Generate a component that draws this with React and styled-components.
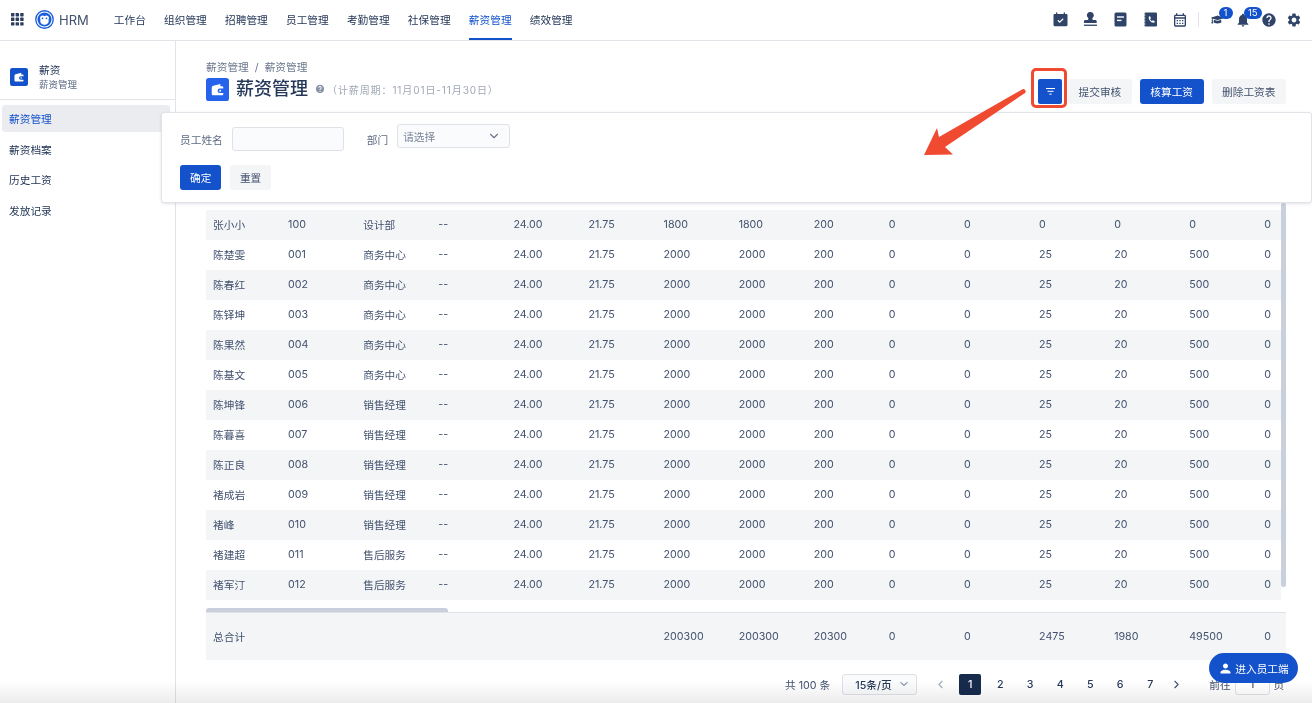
import React from "react";
import styled, { createGlobalStyle } from "styled-components";
import { MdHelp, MdNotifications, MdSettings, MdOutlineCalendarMonth, MdPerson } from "react-icons/md";
import { FaGraduationCap } from "react-icons/fa";
import { FiChevronDown, FiChevronLeft, FiChevronRight } from "react-icons/fi";

const navItems = ["工作台", "组织管理", "招聘管理", "员工管理", "考勤管理", "社保管理", "薪资管理", "绩效管理"];
const sideItems = ["薪资管理", "薪资档案", "历史工资", "发放记录"];

const staff = [
    ["陈楚雯", "001", "商务中心"],
    ["陈春红", "002", "商务中心"],
    ["陈铎坤", "003", "商务中心"],
    ["陈果然", "004", "商务中心"],
    ["陈基文", "005", "商务中心"],
    ["陈坤锋", "006", "销售经理"],
    ["陈暮喜", "007", "销售经理"],
    ["陈正良", "008", "销售经理"],
    ["褚成岩", "009", "销售经理"],
    ["褚峰", "010", "销售经理"],
    ["褚建超", "011", "售后服务"],
    ["褚军汀", "012", "售后服务"],
];

const rows = [
    ["张小小", "100", "设计部", "--", "24.00", "21.75", "1800", "1800", "200", "0", "0", "0", "0", "0", "0"],
    ...staff.map((s) => [...s, "--", "24.00", "21.75", "2000", "2000", "200", "0", "0", "25", "20", "500", "0"]),
];

const totals = ["总合计", "", "", "", "", "", "200300", "200300", "20300", "0", "0", "2475", "1980", "49500", "0"];

const WalletIcon = ({ size, color }) => (
    <svg width={size} height={size} viewBox="0 0 24 24">
        <rect width="24" height="24" rx="3" fill={color} />
        <path d="M6 10.2c0-1 .7-1.8 1.6-2L15 6.2v2.3h2c.6 0 1 .4 1 1V11h-3.6a2.3 2.3 0 0 0 0 4.6H18v1.4c0 .6-.4 1-1 1H7c-.6 0-1-.4-1-1z" fill="#fff" />
        <circle cx="14.8" cy="13.3" r="1" fill="#fff" />
    </svg>
);

const AppsIcon = () => (
    <svg width="13" height="13" viewBox="0 0 13 13" fill="#2c3e5d">
        {[0, 1, 2].flatMap((r) =>
            [0, 1, 2].map((c) => <rect key={`${r}${c}`} x={c * 4.6} y={r * 4.6} width="3.4" height="3.4" rx=".6" />)
        )}
    </svg>
);

const LogoIcon = () => (
    <svg width="19" height="19" viewBox="0 0 20 20">
        <circle cx="10" cy="10" r="9.2" fill="#fff" stroke="#1b5fdc" strokeWidth="1.4" />
        <circle cx="10" cy="10" r="7.4" fill="#1b5fdc" />
        <path d="M6 6.5c1.2-.9 2.8-.9 4 0 1.2-.9 2.8-.9 4 0 .9 1 .9 2.6.2 3.7.9 2.6-1 5.3-4.2 5.3s-5.100-2.700-4.200-5.300C5.100 9.100 5.100 7.500 6 6.500z" fill="#fff" />
        <circle cx="7.900" cy="8.800" r=".9" fill="#1b5fdc" />
        <circle cx="12.100" cy="8.800" r=".9" fill="#1b5fdc" />
    </svg>
);

const CalendarCheck = () => (
    <svg width="15" height="15" viewBox="0 0 15 15">
        <path d="M3 .5h1.300v1.500h6.400V.5H12v1.500h1.300c.7 0 1.200.5 1.200 1.200v9.900c0 .7-.5 1.200-1.200 1.200H1.700c-.7 0-1.200-.5-1.200-1.200V3.200C.5 2.500 1 2 1.700 2H3z" fill="#2f4468" />
        <path d="M4.800 8.300l1.900 1.800 3.500-3.300" fill="none" stroke="#fff" strokeWidth="1.200" />
    </svg>
);

const StampIcon = () => (
    <svg width="15" height="15" viewBox="0 0 15 15" fill="#2f4468">
        <path d="M7.500 0a3.300 3.300 0 0 1 2 5.900c-.3.600-.2 1.600.5 2.100h2.300c.8 0 1.400.6 1.400 1.400V11H1V9.400C1 8.600 1.600 8 2.400 8h2.300c.7-.5.800-1.500.5-2.100A3.300 3.300 0 0 1 7.500 0z" />
        <rect x="1" y="12.600" width="13" height="1.300" />
    </svg>
);

const FormIcon = () => (
    <svg width="15" height="15" viewBox="0 0 15 15">
        <rect x="1.500" y=".5" width="12" height="14" rx="1.500" fill="#2f4468" />
        <rect x="4" y="4.300" width="7" height="1.400" fill="#fff" />
        <rect x="4" y="7.700" width="4.500" height="1.400" fill="#fff" />
    </svg>
);

const PhoneBookIcon = () => (
    <svg width="15" height="15" viewBox="0 0 15 15">
        <rect x="1.500" y=".5" width="12.500" height="14" rx="1.200" fill="#2f4468" />
        <path d="M1 3h1.500M1 6h1.500M1 9h1.500M1 12h1.500" stroke="#fff" strokeWidth=".8" />
        <path d="M5.600 3.300l1.300-.3.900 2.100-.9.700c.3.900 1 1.700 1.900 2.100l.8-.8 2 1-.3 1.300c-3.200.8-6.400-3-5.700-6.100z" fill="#fff" transform="translate(.2 1.200)" />
    </svg>
);

const Root = createGlobalStyle`
    html, body {
        margin: 0;
        padding: 0;
        background: #fff;
    }
    body {
        font-family: Inter, "Noto Sans CJK SC", sans-serif;
        color: #253858;
    }
`;

const App = () => (
    <Page>
        <Root />
        <TopBar>
            <AppsIcon />
            <Brand>
                <LogoIcon />
                <BrandName>HRM</BrandName>
            </Brand>
            <Nav>
                {navItems.map((item) => (
                    <NavItem key={item} $active={item === "薪资管理"}>
                        {item}
                    </NavItem>
                ))}
            </Nav>
            <Tools>
                <ToolSlot><CalendarCheck /></ToolSlot>
                <ToolSlot><StampIcon /></ToolSlot>
                <ToolSlot><FormIcon /></ToolSlot>
                <ToolSlot><PhoneBookIcon /></ToolSlot>
                <ToolSlot><MdOutlineCalendarMonth size={16} /></ToolSlot>
                <ToolDivider />
                <ToolSlot $narrow>
                    <FaGraduationCap size={13} />
                    <Badge>1</Badge>
                </ToolSlot>
                <ToolSlot $narrow>
                    <MdNotifications size={16} />
                    <Badge>15</Badge>
                </ToolSlot>
                <ToolSlot $narrow><MdHelp size={16} /></ToolSlot>
                <ToolSlot $narrow><MdSettings size={16} /></ToolSlot>
            </Tools>
        </TopBar>

        <Body>
            <Sidebar>
                <SideHead>
                    <WalletIcon size={18} color="#1452cc" />
                    <SideTitles>
                        <SideTitle>薪资</SideTitle>
                        <SideSub>薪资管理</SideSub>
                    </SideTitles>
                </SideHead>
                <SideMenu>
                    {sideItems.map((item, index) => (
                        <SideItem key={item} $active={index === 0}>
                            {item}
                        </SideItem>
                    ))}
                </SideMenu>
            </Sidebar>

            <Main>
                <PageHead>
                    <div>
                        <Crumbs>薪资管理 <CrumbSep>/</CrumbSep> 薪资管理</Crumbs>
                        <TitleRow>
                            <WalletIcon size={23} color="#2563eb" />
                            <Title>薪资管理</Title>
                            <MdHelp size={10} color="#8a94a6" />
                            <Period>（计薪周期：11月01日-11月30日）</Period>
                        </TitleRow>
                    </div>
                    <Actions>
                        <IconButton>
                            <svg width="9" height="7" viewBox="0 0 9 7" fill="#fff">
                                <rect width="9" height="1" />
                                <rect x="1.500" y="2.800" width="6" height="1" />
                                <rect x="3.300" y="5.600" width="2.400" height="1" />
                            </svg>
                            <RedFrame />
                        </IconButton>
                        <Button>提交审核</Button>
                        <Button $primary>核算工资</Button>
                        <Button>删除工资表</Button>
                    </Actions>
                </PageHead>

                <TableArea>
                    {rows.map((row, r) => (
                        <Row key={row[1]} $shaded={r % 2 === 0}>
                            {row.map((cell, c) => (
                                <Cell key={c}>{cell}</Cell>
                            ))}
                        </Row>
                    ))}
                    <VScroll />
                    <HScrollTrack>
                        <HScroll />
                    </HScrollTrack>
                    <TotalRow>
                        {totals.map((cell, c) => (
                            <Cell key={c}>{cell}</Cell>
                        ))}
                    </TotalRow>
                </TableArea>

                <Pager>
                    <PagerText>共 100 条</PagerText>
                    <PageSize>
                        15条/页
                        <FiChevronDown size={12} color="#42526e" />
                    </PageSize>
                    <PageNums>
                        <PageArrow $muted><FiChevronLeft size={13} /></PageArrow>
                        {[1, 2, 3, 4, 5, 6, 7].map((n) => (
                            <PageNum key={n} $active={n === 1}>{n}</PageNum>
                        ))}
                        <NextArrow><FiChevronRight size={13} /></NextArrow>
                    </PageNums>
                    <JumpWrap>
                        <PagerText>前往</PagerText>
                        <JumpBox>1</JumpBox>
                        <PagerText>页</PagerText>
                    </JumpWrap>
                </Pager>
            </Main>
        </Body>

        <FilterPanel>
            <FilterFields>
                <FieldLabel>员工姓名</FieldLabel>
                <NameInput />
                <DeptLabel>部门</DeptLabel>
                <DeptSelect>
                    请选择
                    <FiChevronDown size={14} color="#6b778c" />
                </DeptSelect>
            </FilterFields>
            <FilterButtons>
                <PanelButton $primary>确定</PanelButton>
                <PanelButton>重置</PanelButton>
            </FilterButtons>
        </FilterPanel>

        <Arrow width="115" height="80" viewBox="0 0 115 80">
            <path
                d="M100.500 5.200c1.900-1.200 4.500 2.200 2.500 3.700L23 63l8 7.500L2 71l13-27 2 9z"
                fill="#f04b30"
            />
        </Arrow>

        <BottomFade />
        <StaffButton>
            <MdPerson size={15} />
            进入员工端
        </StaffButton>
    </Page>
);

const Page = styled.div`
    position: relative;
    width: 1312px;
    height: 703px;
    overflow: hidden;
    font-size: 10.7px;
`;

const TopBar = styled.header`
    display: flex;
    align-items: center;
    height: 39px;
    padding: 0 0 1px 11px;
    border-bottom: 1px solid #e1e3e8;
`;

const Brand = styled.div`
    display: flex;
    align-items: center;
    gap: 5px;
    margin-left: 11px;
`;

const BrandName = styled.span`
    font-size: 13px;
    color: #42526e;
`;

const Nav = styled.nav`
    display: flex;
    gap: 18.200px;
    margin: 0 0 -1px 25px;
`;

const NavItem = styled.a`
    display: flex;
    align-items: center;
    height: 40px;
    box-sizing: border-box;
    white-space: nowrap;
    color: ${({ $active }) => ($active ? "#1452cc" : "#253858")};
    border-bottom: 2px solid ${({ $active }) => ($active ? "#1452cc" : "transparent")};
`;

const Tools = styled.div`
    display: flex;
    align-items: center;
    margin-left: auto;
    padding-right: 5px;
`;

const ToolSlot = styled.span`
    position: relative;
    display: flex;
    justify-content: center;
    align-items: center;
    width: ${({ $narrow }) => ($narrow ? "25.500px" : "30px")};
    height: 20px;
    color: #2f4468;
`;

const ToolDivider = styled.span`
    width: 1px;
    height: 15px;
    margin: 0 6px 0 3px;
    background: #e1e3e8;
`;

const Badge = styled.span`
    position: absolute;
    top: -3px;
    left: 13.500px;
    min-width: 6px;
    padding: 0 4px;
    height: 12px;
    line-height: 12px;
    border-radius: 6px;
    text-align: center;
    font-size: 9.500px;
    color: #fff;
    background: #1452cc;
`;

const Body = styled.div`
    display: flex;
    height: 662px;
`;

const Sidebar = styled.aside`
    flex: none;
    width: 175px;
    border-right: 1px solid #e1e3e8;
`;

const SideHead = styled.div`
    display: flex;
    align-items: center;
    gap: 11px;
    box-sizing: border-box;
    height: 59px;
    padding: 14px 0 0 10px;
    border-bottom: 1px solid #e1e3e8;
`;

const SideTitles = styled.div`
    display: flex;
    flex-direction: column;
    gap: 1px;
`;

const SideTitle = styled.span`
    line-height: 13px;
    color: #253858;
`;

const SideSub = styled.span`
    line-height: 13px;
    font-size: 9.500px;
    color: #5e6c84;
`;

const SideMenu = styled.div`
    display: flex;
    flex-direction: column;
    gap: 3.700px;
    padding: 5px 5px 0 2px;
`;

const SideItem = styled.a`
    display: flex;
    align-items: center;
    height: 27px;
    padding-left: 7px;
    border-radius: 3px;
    color: ${({ $active }) => ($active ? "#1452cc" : "#253858")};
    background: ${({ $active }) => ($active ? "#ebecf0" : "transparent")};
`;

const Main = styled.main`
    flex: 1;
    min-width: 0;
    padding: 0 26px 0 30px;
`;

const PageHead = styled.div`
    display: flex;
    justify-content: space-between;
    align-items: flex-start;
    height: 169px;
    padding-top: 20px;
    box-sizing: border-box;
`;

const Crumbs = styled.div`
    color: #6b778c;
    line-height: 13px;
`;

const CrumbSep = styled.span`
    margin: 0 3px;
`;

const TitleRow = styled.div`
    display: flex;
    align-items: center;
    margin-top: 3px;
`;

const Title = styled.h1`
    margin: 0 7px;
    font-size: 18px;
    font-weight: 500;
    line-height: 24px;
    color: #253858;
`;

const Period = styled.span`
    margin-left: 2px;
    font-size: 10px;
    letter-spacing: 0.9px;
    color: #a0a8b5;
`;

const Actions = styled.div`
    display: flex;
    gap: 8px;
    margin-top: 18px;
`;

const Button = styled.button`
    height: 25px;
    padding: 0 10.500px;
    border: 0;
    border-radius: 3px;
    font: inherit;
    white-space: nowrap;
    color: ${({ $primary }) => ($primary ? "#fff" : "#42526e")};
    background: ${({ $primary }) => ($primary ? "#1452cc" : "#f4f5f7")};
`;

const PanelButton = styled(Button)`
    padding: 0 10px;
`;

const IconButton = styled.button`
    position: relative;
    display: flex;
    justify-content: center;
    align-items: center;
    width: 24px;
    height: 25px;
    margin-right: -2px;
    padding: 0;
    border: 0;
    border-radius: 2px;
    background: #1452cc;
`;

const RedFrame = styled.span`
    position: absolute;
    top: -11px;
    left: -7px;
    box-sizing: border-box;
    width: 36px;
    height: 40px;
    border: 3px solid #f04b30;
    border-radius: 5px;
`;

const TableArea = styled.div`
    position: relative;
`;

const Row = styled.div`
    display: grid;
    grid-template-columns: repeat(15, 75.100px);
    align-items: center;
    box-sizing: border-box;
    width: 1075px;
    height: 30px;
    padding-bottom: 2px;
    overflow: hidden;
    color: #42526e;
    background: ${({ $shaded }) => ($shaded ? "#f4f5f7" : "#fff")};
`;

const Cell = styled.span`
    padding-left: 7px;
    white-space: nowrap;
`;

const VScroll = styled.span`
    position: absolute;
    top: -7px;
    left: 1075px;
    width: 5px;
    height: 384px;
    border-radius: 3px;
    background: #c9d0dc;
`;

const HScrollTrack = styled.div`
    height: 12px;
    display: flex;
    align-items: flex-end;
`;

const HScroll = styled.span`
    width: 242px;
    height: 4px;
    border-radius: 3px 3px 0 0;
    background: #c9d0dc;
`;

const TotalRow = styled(Row)`
    width: 1080px;
    height: 48px;
    padding-bottom: 0;
    border-top: 1px solid #dfe1e6;
    background: #f4f5f7;
`;

const Pager = styled.div`
    display: flex;
    align-items: center;
    height: 22px;
    margin-top: 13px;
    padding-left: 579px;
`;

const PagerText = styled.span`
    color: #42526e;
    white-space: nowrap;
`;

const PageSize = styled.div`
    display: flex;
    justify-content: space-between;
    align-items: center;
    box-sizing: border-box;
    width: 75px;
    height: 21px;
    margin-left: 12px;
    padding: 0 6px 0 12px;
    border: 1px solid #dfe1e6;
    border-radius: 3px;
    font-weight: 500;
    color: #253858;
    background: #fafbfc;
`;

const PageNums = styled.div`
    display: flex;
    align-items: center;
    margin-left: 8px;
`;

const PageArrow = styled.span`
    display: flex;
    justify-content: center;
    width: 30px;
    color: ${({ $muted }) => ($muted ? "#a5adba" : "#42526e")};
`;

const NextArrow = styled(PageArrow)`
    width: 22px;
`;

const PageNum = styled.span`
    width: 22px;
    height: 21px;
    margin: 0 4px;
    line-height: 21px;
    text-align: center;
    border-radius: 2px;
    font-weight: 500;
    color: ${({ $active }) => ($active ? "#fff" : "#253858")};
    background: ${({ $active }) => ($active ? "#172b4d" : "transparent")};
`;

const JumpWrap = styled.div`
    display: flex;
    align-items: center;
    gap: 4px;
    margin-left: 22px;
`;

const JumpBox = styled.span`
    box-sizing: border-box;
    width: 35px;
    height: 21px;
    line-height: 19px;
    text-align: center;
    border: 1px solid #dfe1e6;
    border-radius: 3px;
`;

const FilterPanel = styled.div`
    position: absolute;
    top: 112px;
    left: 161px;
    width: 1151px;
    height: 91px;
    box-sizing: border-box;
    padding: 12px 0 0 18px;
    background: #fff;
    border: 1px solid #e1e3e8;
    border-radius: 3px;
    box-shadow: 0 1px 3px rgba(9, 30, 66, 0.12);
`;

const FilterFields = styled.div`
    display: flex;
    align-items: flex-start;
`;

const FieldLabel = styled.label`
    margin-top: 7px;
    color: #5e6c84;
`;

const DeptLabel = styled(FieldLabel)`
    margin-left: 23px;
`;

const NameInput = styled.input`
    box-sizing: border-box;
    width: 112px;
    height: 24px;
    margin: 2px 0 0 9px;
    border: 1px solid #dfe1e6;
    border-radius: 3px;
    background: #fafbfc;
`;

const DeptSelect = styled.div`
    display: flex;
    justify-content: space-between;
    align-items: center;
    box-sizing: border-box;
    width: 113px;
    height: 24px;
    margin: -1px 0 0 9px;
    padding: 0 8px 0 5px;
    border: 1px solid #dfe1e6;
    border-radius: 3px;
    color: #7a869a;
    background: #fafbfc;
`;

const FilterButtons = styled.div`
    display: flex;
    gap: 8.500px;
    margin-top: 14px;
`;

const Arrow = styled.svg`
    position: absolute;
    top: 84px;
    left: 922px;
`;

const BottomFade = styled.div`
    position: absolute;
    left: 0;
    right: 0;
    bottom: 0;
    height: 22px;
    pointer-events: none;
    mix-blend-mode: multiply;
    background: linear-gradient(to bottom, #fff, #ececec);
`;

const StaffButton = styled.button`
    position: absolute;
    top: 653px;
    left: 1209px;
    display: flex;
    align-items: center;
    justify-content: center;
    gap: 2px;
    width: 89px;
    height: 30px;
    padding: 0;
    border: 0;
    border-radius: 15px;
    font: inherit;
    color: #fff;
    background: #1452cc;
`;

export default App;
